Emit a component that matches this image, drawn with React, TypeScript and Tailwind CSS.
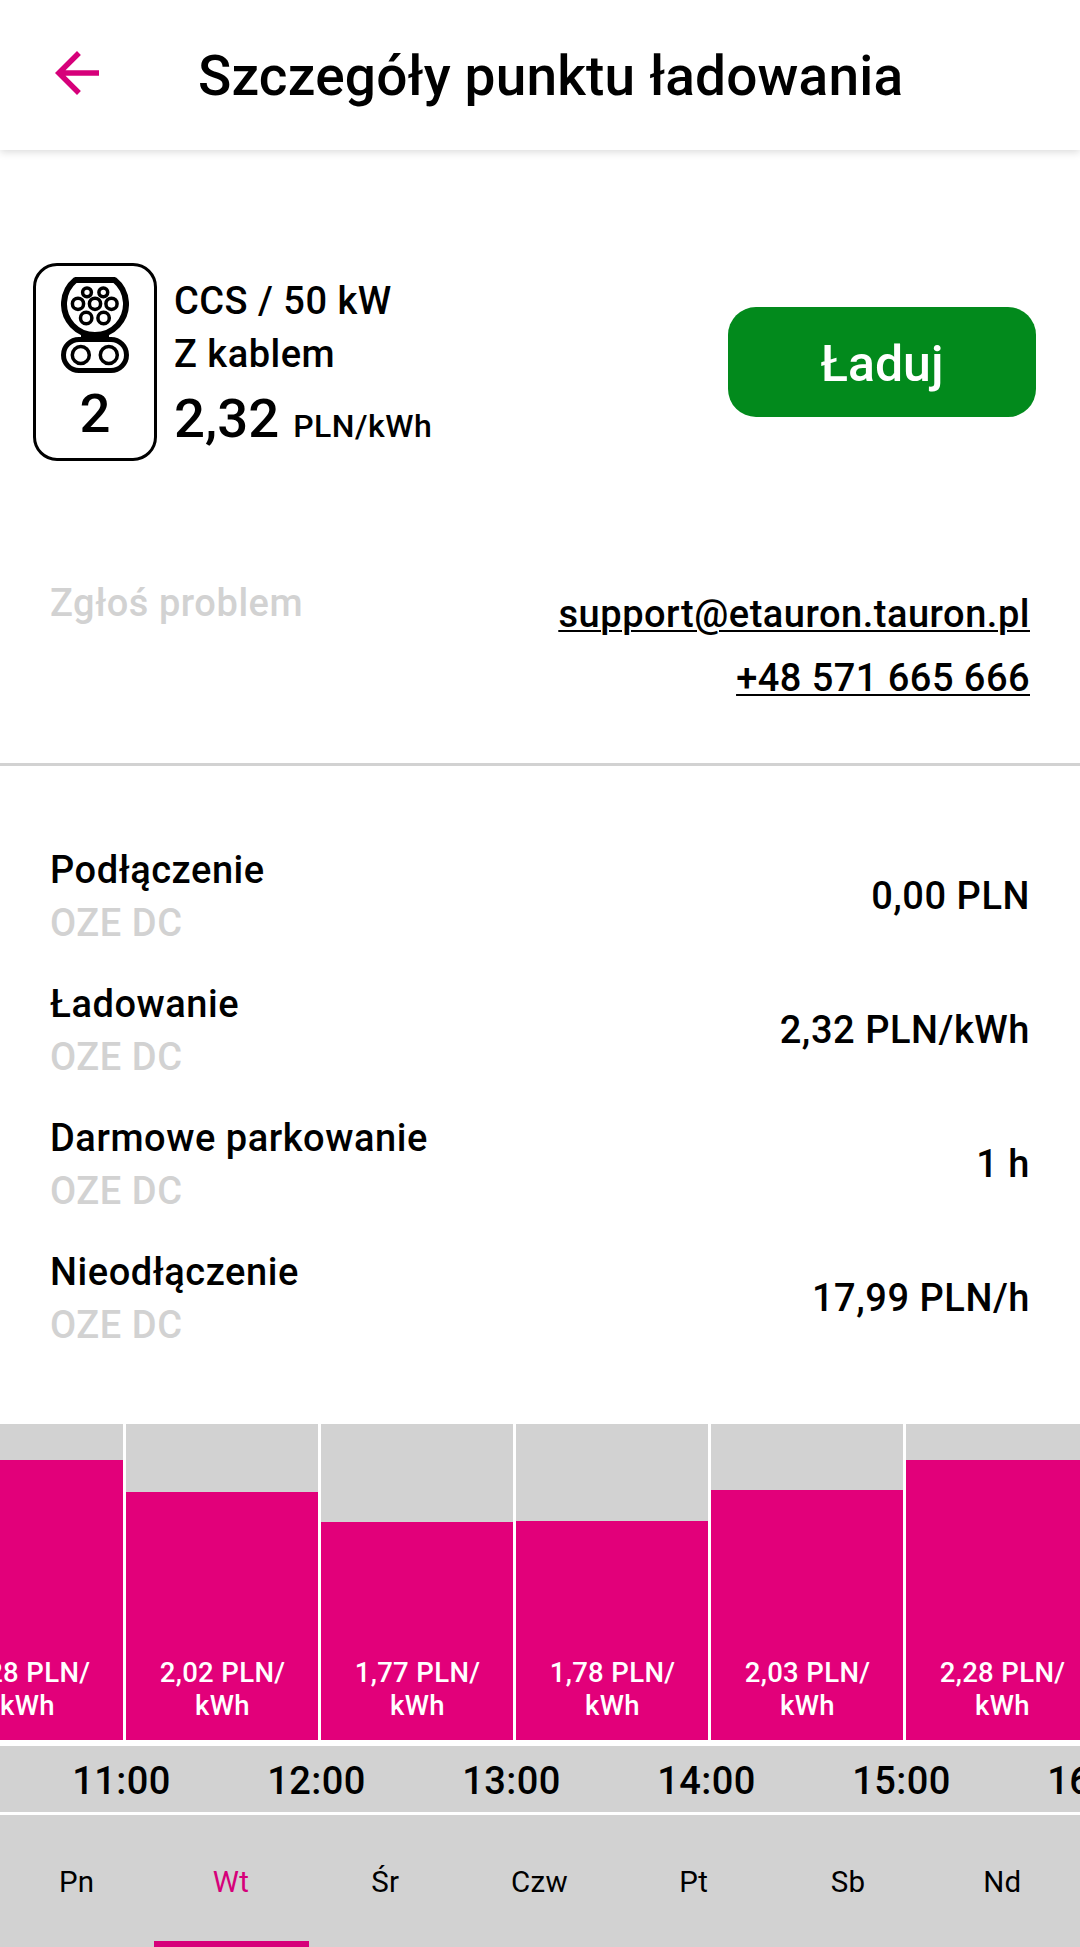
import * as React from "react"

const tariffs = [
  { label: "Podłączenie", plan: "OZE DC", value: "0,00 PLN" },
  { label: "Ładowanie", plan: "OZE DC", value: "2,32 PLN/kWh" },
  { label: "Darmowe parkowanie", plan: "OZE DC", value: "1 h" },
  { label: "Nieodłączenie", plan: "OZE DC", value: "17,99 PLN/h" },
]

// height is the bar height in px, inside the 316px tall track
const prices = [
  { price: "2,28", height: 280, until: "11:00" },
  { price: "2,02", height: 248, until: "12:00" },
  { price: "1,77", height: 218, until: "13:00" },
  { price: "1,78", height: 219, until: "14:00" },
  { price: "2,03", height: 250, until: "15:00" },
  { price: "2,28", height: 280, until: "16:00" },
]

const days = ["Pn", "Wt", "Śr", "Czw", "Pt", "Sb", "Nd"]

const BackIcon = () => (
  <svg viewBox="0 0 24 24" className="size-[66px]" fill="#d6007a">
    <path d="M20 11H7.83l5.59-5.59L12 4l-8 8 8 8 1.41-1.41L7.83 13H20v-2z" />
  </svg>
)

const CcsIcon = () => (
  <svg viewBox="0 0 68 96" className="h-24 w-[68px]" fill="none" stroke="#000">
    <path d="M14.4 3H53.6A31 31 0 1 1 14.4 3Z" strokeWidth="6" strokeLinejoin="bevel" />
    <path d="M20 60H48" strokeWidth="4" />
    <rect x="2.5" y="62.5" width="63" height="31" rx="15.5" strokeWidth="5" />
    <g strokeWidth="3.5">
      <circle cx="26" cy="15.3" r="4.4" />
      <circle cx="42.3" cy="15.3" r="4.4" />
      <circle cx="17" cy="26.8" r="5.6" />
      <circle cx="34" cy="26.8" r="5.6" />
      <circle cx="50.5" cy="26.8" r="5.6" />
      <circle cx="25.2" cy="41" r="5.7" />
      <circle cx="42.6" cy="41" r="5.7" />
      <circle cx="19.8" cy="78" r="8.5" />
      <circle cx="47.8" cy="78" r="8.5" />
    </g>
  </svg>
)

const Header = () => (
  <header className="flex h-[150px] shrink-0 items-start bg-white shadow-[0_2px_8px_rgba(0,0,0,0.15)]">
    <button className="mt-[40px] ml-[44px]">
      <BackIcon />
    </button>
    <h1 className="mt-[44px] ml-[88px] text-[55px] leading-[64px] font-medium tracking-[0.17px] whitespace-nowrap">
      Szczegóły punktu ładowania
    </h1>
  </header>
)

const Connector = () => (
  <section className="mt-[113px] flex h-[198px] shrink-0 items-start pr-[44px] pl-[33px]">
    <div className="flex h-[198px] w-[124px] flex-col items-center rounded-[24px] border-3 border-black pt-[11px]">
      <CcsIcon />
      <span className="mt-2 text-[54.5px] leading-[64px] font-medium">2</span>
    </div>
    <div className="mt-[12px] ml-[17px] text-[38px] leading-[53px] font-medium tracking-[0.5px]">
      <p>CCS / 50 kW</p>
      <p>Z kablem</p>
      <p className="leading-[74px]">
        <span className="text-[54.5px] tracking-normal">2,32</span>
        <span className="ml-[14px] text-[32px]">PLN/kWh</span>
      </p>
    </div>
    <button className="mt-[44px] ml-auto h-[110px] w-[308px] rounded-[28px] bg-[#028a1c] pt-[5px] text-[50px] font-medium text-white">
      Ładuj
    </button>
  </section>
)

const Support = () => (
  <section className="mt-[116px] flex h-[189px] shrink-0 justify-between border-b-3 border-[#d2d2d2] pr-[50px] pl-[50px] text-[38px] font-medium tracking-[0.55px]">
    <p className="leading-[53px] text-[#d2d2d2]">Zgłoś problem</p>
    <div className="mt-[5px] flex flex-col items-end leading-[64px] underline decoration-2 underline-offset-[3px]">
      <a className="tracking-[0.52px]">support@etauron.tauron.pl</a>
      <a className="tracking-[0.45px]">+48 571 665 666</a>
    </div>
  </section>
)

const Tariffs = () => (
  <section className="mt-[78px] flex shrink-0 flex-col gap-[28px] px-[50px] text-[38px] leading-[53px] font-medium tracking-[0.55px]">
    {tariffs.map((t) => (
      <div key={t.label} className="flex h-[106px] items-center justify-between">
        <div>
          <p>{t.label}</p>
          <p className="text-[#d2d2d2]">{t.plan}</p>
        </div>
        <p className="pb-[2px]">{t.value}</p>
      </div>
    ))}
  </section>
)

const PriceChart = () => (
  <section className="mt-[72px] shrink-0 overflow-hidden font-medium">
    <div className="-ml-[69px] flex gap-[3px]">
      {prices.map((p) => (
        <div key={p.until} className="flex h-[316px] w-[192px] shrink-0 items-end bg-[#d2d2d2]">
          <div
            className="flex w-full flex-col justify-end bg-[#e2007a] pb-[18px] pl-px text-center text-[27.5px] leading-[33px] tracking-[0.35px] text-white"
            style={{ height: p.height }}
          >
            <p>{p.price} PLN/</p>
            <p>kWh</p>
          </div>
        </div>
      ))}
    </div>
    <div className="mt-[6px] flex h-[66px] bg-[#d2d2d2] pl-[24px]">
      {prices.map((p) => (
        <span
          key={p.until}
          className="w-[195px] shrink-0 text-center text-[38px] leading-[70px] tracking-[0.4px]"
        >
          {p.until}
        </span>
      ))}
    </div>
  </section>
)

const DayTabs = () => {
  const [active, setActive] = React.useState("Wt")

  return (
    <nav className="mt-[3px] grid grow grid-cols-7 bg-[#d2d2d2] text-[29.5px] tracking-[0.3px]">
      {days.map((day) => (
        <button
          key={day}
          onClick={() => setActive(day)}
          className={
            day === active
              ? "border-b-6 border-[#d6007a] pt-[9px] pr-px text-[#d6007a]"
              : "border-b-6 border-transparent pt-[9px] pr-px"
          }
        >
          {day}
        </button>
      ))}
    </nav>
  )
}

export default function App() {
  return (
    <div className="flex h-[1947px] w-[1080px] flex-col overflow-hidden bg-white font-['Roboto',sans-serif] text-black">
      <Header />
      <Connector />
      <Support />
      <Tariffs />
      <PriceChart />
      <DayTabs />
    </div>
  )
}
